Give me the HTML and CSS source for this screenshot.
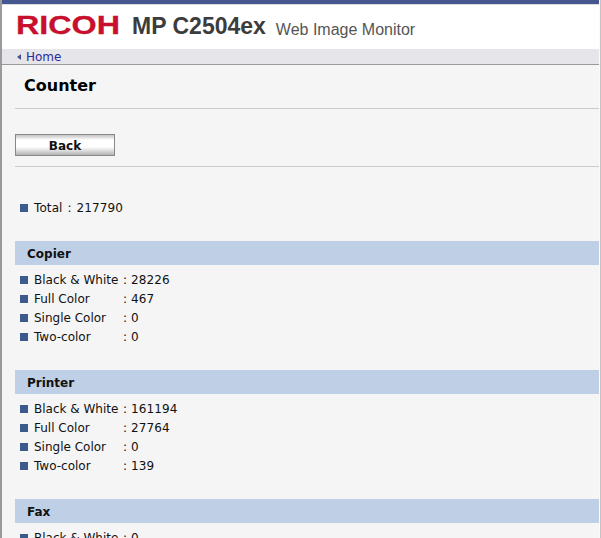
FILE: index.html
```html
<!DOCTYPE html>
<html lang="en">
<head>
    <meta charset="UTF-8">
    <title>Web Image Monitor - Counter</title>
    <link rel="stylesheet" href="styles.css">
</head>
<body>
    <div class="frame">
        <div class="header">
            <svg class="logo" width="108" height="24" viewBox="0 0 108 24" role="img" aria-label="RICOH">
                <text x="0" y="19" textLength="104" lengthAdjust="spacingAndGlyphs" class="logo-text">RICOH</text>
            </svg>
            <span class="model">MP C2504ex</span>
            <span class="product">Web Image Monitor</span>
        </div>
        <div class="nav">
            <span class="nav-arrow"></span>
            <a class="nav-link" href="#">Home</a>
        </div>
        <div class="content">
            <h1 class="page-title">Counter</h1>
            <div class="button-row">
                <button type="button" class="btn">Back</button>
            </div>

            <div class="total">
                <div class="row"><span class="bullet"></span><span class="total-text">Total : 217790</span></div>
            </div>

            <div class="section">
                <h2 class="section-title">Copier</h2>
                <div class="row"><span class="bullet"></span><span class="label">Black &amp; White</span><span class="value">: 28226</span></div>
                <div class="row"><span class="bullet"></span><span class="label">Full Color</span><span class="value">: 467</span></div>
                <div class="row"><span class="bullet"></span><span class="label">Single Color</span><span class="value">: 0</span></div>
                <div class="row"><span class="bullet"></span><span class="label">Two-color</span><span class="value">: 0</span></div>
            </div>

            <div class="section">
                <h2 class="section-title">Printer</h2>
                <div class="row"><span class="bullet"></span><span class="label">Black &amp; White</span><span class="value">: 161194</span></div>
                <div class="row"><span class="bullet"></span><span class="label">Full Color</span><span class="value">: 27764</span></div>
                <div class="row"><span class="bullet"></span><span class="label">Single Color</span><span class="value">: 0</span></div>
                <div class="row"><span class="bullet"></span><span class="label">Two-color</span><span class="value">: 139</span></div>
            </div>

            <div class="section">
                <h2 class="section-title">Fax</h2>
                <div class="row"><span class="bullet"></span><span class="label">Black &amp; White</span><span class="value">: 0</span></div>
            </div>
        </div>
    </div>
</body>
</html>
```

FILE: styles.css
```css
html, body {
    margin: 0;
    padding: 0;
    height: 100%;
    overflow: hidden;
    background: #f5f5f5;
}

body {
    font-family: "DejaVu Sans", sans-serif;
    font-size: 12px;
    color: #111;
}

.frame {
    height: 538px;
    overflow: hidden;
    margin-right: 1px;
    border-left: 2px solid #9a9a9a;
    border-right: 1px solid #fafafa;
    box-shadow: 1px 0 0 #c4c4c4;
}

.header {
    display: flex;
    align-items: flex-start;
    height: 45px;
    background: #fff;
    border-top: 4px solid #46578f;
    box-shadow: inset 0 1px 0 #dcdcdc;
}

.logo {
    flex: none;
    overflow: visible;
    margin: 11px 0 0 14px;
}

.logo-text {
    font-family: "Liberation Sans", sans-serif;
    font-weight: bold;
    font-size: 25px;
    fill: #c8102e;
    stroke: #c8102e;
    stroke-width: 0.3;
}

.model {
    margin: 9px 0 0 8px;
    font-family: "Liberation Sans", sans-serif;
    font-weight: bold;
    font-size: 23px;
    color: #3c3c3c;
}

.product {
    margin: 17px 0 0 10px;
    font-family: "Liberation Sans", sans-serif;
    font-size: 16px;
    color: #555;
}

.nav {
    display: flex;
    align-items: center;
    height: 15px;
    padding-left: 15px;
    background: #e6e6ea;
    border-bottom: 1px solid #999;
}

.nav-arrow {
    width: 0;
    height: 0;
    margin-right: 5px;
    border-top: 3.5px solid transparent;
    border-bottom: 3.5px solid transparent;
    border-right: 4px solid #46578f;
}

.nav-link {
    color: #2a2aa0;
    text-decoration: none;
}

.page-title {
    margin: 0 0 0 13px;
    padding: 10px 0 12px 9px;
    font-size: 16px;
    line-height: 21px;
    font-weight: bold;
    color: #000;
}

.button-row {
    margin-left: 13px;
    padding: 25px 0 10px;
    border-top: 1px solid #ccc;
    border-bottom: 1px solid #ccc;
}

.btn {
    display: block;
    width: 100px;
    height: 22px;
    padding: 1px 0 0;
    font-family: inherit;
    font-size: 12px;
    font-weight: bold;
    color: #111;
    border: 1px solid #888;
    background: linear-gradient(#c4c4c4, #fff 25%, #fff 60%, #b4b4b4);
}

.total {
    margin: 31px 0 0 18px;
    padding-bottom: 5px;
}

.total-text {
    word-spacing: 1px;
    letter-spacing: 0.1px;
}

.row {
    display: flex;
    align-items: center;
    height: 19px;
}

.bullet {
    width: 8px;
    height: 8px;
    margin-right: 6px;
    background: #3c5a8c;
}

.label {
    width: 89px;
}

.value {
    letter-spacing: 0.1px;
}

.section {
    margin-top: 19px;
    padding-bottom: 5px;
}

.section-title {
    margin: 0 0 5px 13px;
    padding: 2px 0 0 12px;
    font-size: 12px;
    line-height: 22px;
    font-weight: bold;
    background: #bfcfe6;
}

.section .row {
    margin-left: 18px;
}
```
